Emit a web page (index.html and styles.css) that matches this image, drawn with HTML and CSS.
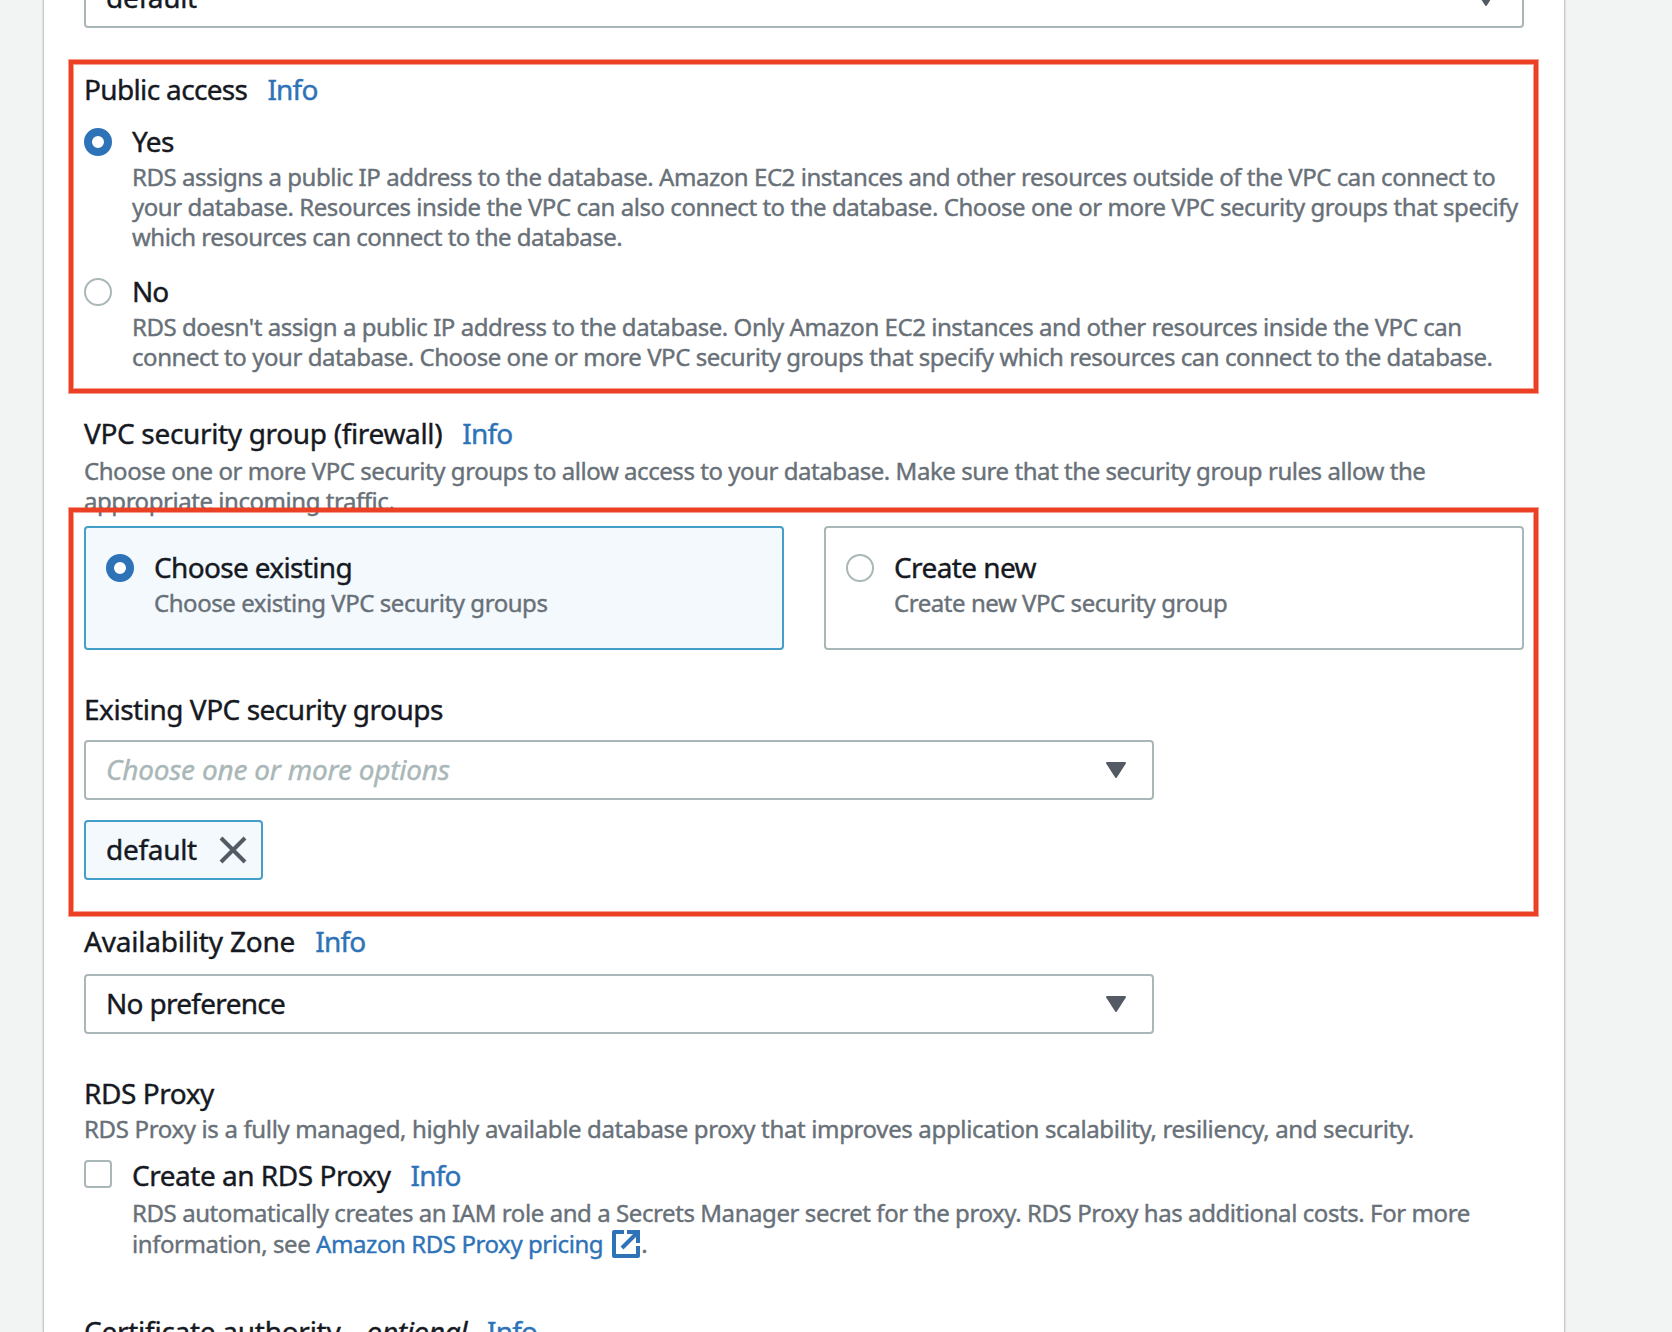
FILE: index.html
```html
<!DOCTYPE html>
<html lang="en">
<head>
<meta charset="utf-8">
<title>Create database - Connectivity</title>
<link rel="stylesheet" href="styles.css">
</head>
<body>
<main class="panel">
  <div class="select select-wide">
    <span class="value t-default">default</span>
    <svg class="caret" viewBox="0 0 20 16"><path d="M1 1H19L10 15Z"/></svg>
  </div>

  <section class="field access">
    <h3 class="label"><span class="t-access">Public access</span><a class="info">Info</a></h3>
    <div class="option">
      <span class="radio checked"></span>
      <div>
        <div class="label"><span class="t-yes">Yes</span></div>
        <p class="desc"><span>RDS assigns a public IP address to the database. Amazon EC2 instances and other resources outside of the VPC can connect to</span><br><span>your database. Resources inside the VPC can also connect to the database. Choose one or more VPC security groups that specify</span><br><span class="t-which">which resources can connect to the database.</span></p>
      </div>
    </div>
    <div class="option option-no">
      <span class="radio"></span>
      <div>
        <div class="label"><span class="t-no">No</span></div>
        <p class="desc"><span>RDS doesn't assign a public IP address to the database. Only Amazon EC2 instances and other resources inside the VPC can</span><br><span>connect to your database. Choose one or more VPC security groups that specify which resources can connect to the database.</span></p>
      </div>
    </div>
    <div class="highlight highlight-access"></div>
  </section>

  <section class="field firewall">
    <h3 class="label"><span class="t-firewall">VPC security group (firewall)</span><a class="info">Info</a></h3>
    <p class="desc desc-firewall"><span>Choose one or more VPC security groups to allow access to your database. Make sure that the security group rules allow the</span><br><span>appropriate incoming traffic.</span></p>
    <div class="tiles">
      <div class="tile selected">
        <span class="radio checked"></span>
        <div>
          <div class="label"><span class="t-choose">Choose existing</span></div>
          <p class="desc"><span>Choose existing VPC security groups</span></p>
        </div>
      </div>
      <div class="tile">
        <span class="radio"></span>
        <div>
          <div class="label"><span class="t-new">Create new</span></div>
          <p class="desc"><span>Create new VPC security group</span></p>
        </div>
      </div>
    </div>
    <div class="highlight highlight-groups"></div>
  </section>

  <section class="field groups">
    <h3 class="label"><span class="t-existing">Existing VPC security groups</span></h3>
    <div class="select">
      <span class="value placeholder">Choose one or more options</span>
      <svg class="caret" viewBox="0 0 20 16"><path d="M1 1H19L10 15Z"/></svg>
    </div>
    <div class="token">
      <span class="value t-default">default</span>
      <svg class="close" viewBox="0 0 28 28"><path d="M2 2L26 26M26 2L2 26"/></svg>
    </div>
  </section>

  <section class="field zone">
    <h3 class="label"><span class="t-zone">Availability Zone</span><a class="info">Info</a></h3>
    <div class="select">
      <span class="value t-pref">No preference</span>
      <svg class="caret" viewBox="0 0 20 16"><path d="M1 1H19L10 15Z"/></svg>
    </div>
  </section>

  <section class="field proxy">
    <h3 class="label"><span class="t-proxy">RDS Proxy</span></h3>
    <p class="desc"><span class="t-managed">RDS Proxy is a fully managed, highly available database proxy that improves application scalability, resiliency, and security.</span></p>
    <div class="option option-proxy">
      <span class="checkbox"></span>
      <div>
        <div class="label"><span class="t-create">Create an RDS Proxy</span><a class="info">Info</a></div>
        <p class="desc desc-proxy"><span class="t-auto">RDS automatically creates an IAM role and a Secrets Manager secret for the proxy. RDS Proxy has additional costs. For more</span><br><span class="t-auto">information, see <a class="link">Amazon RDS Proxy pricing</a></span><svg class="external" viewBox="0 0 28 28"><path class="frame" d="M12 2H2V26H26V16"/><path class="arrow" d="M10 18L25 3"/><path class="head" d="M15 0H28V13H24V4H15Z"/></svg>.</p>
      </div>
    </div>
  </section>

  <section class="field authority">
    <h3 class="label"><span class="t-cert">Certificate authority</span><em class="optional"> - optional</em><a class="info">Info</a></h3>
  </section>
</main>
</body>
</html>
```
FILE: styles.css
```css
* { box-sizing: border-box; }

html, body { height: 100%; }

body {
  margin: 0;
  overflow: hidden;
  background: #f2f3f3;
  color: #16191f;
  font-family: "Noto Sans", "Open Sans", sans-serif;
  font-size: 28px;
  letter-spacing: -0.6px;
  -webkit-text-stroke: 0.4px currentColor;
}

.panel {
  width: 1522px;
  height: 1332px;
  margin-left: 43px;
  padding: 0 40px;
  background: #fff;
  border: 1px solid #c3c9ca;
  border-width: 0 1px;
  box-shadow: 0 0 2px rgba(0, 28, 36, 0.2);
  overflow: hidden;
}

/* Text */
.label {
  display: flex;
  margin: 0;
  font-size: 28px;
  font-weight: 400;
  line-height: 36px;
  white-space: pre;
}

.desc {
  margin: 3px 0 0;
  color: #687078;
  font-size: 24px;
  line-height: 30px;
  letter-spacing: -0.45px;
  white-space: nowrap;
}

.info { margin-left: 20px; color: #2e73b8; letter-spacing: -0.8px; }
.link { color: #2e73b8; }
.optional { margin-left: 4px; letter-spacing: -0.4px; }

/* Select boxes */
.select {
  display: flex;
  align-items: center;
  justify-content: space-between;
  width: 1070px;
  height: 60px;
  padding: 0 26px 0 20px;
  border: 2px solid #aab7b8;
  border-radius: 4px;
  line-height: 36px;
}

.value { padding-bottom: 2px; }
.select-wide { width: 1440px; margin-top: -32px; }
.caret { width: 20px; height: 16px; }

.caret path {
  fill: #545b64;
  stroke: #545b64;
  stroke-width: 2;
  stroke-linejoin: round;
}

.placeholder { color: #aab7b8; font-style: italic; letter-spacing: -0.23px; }

/* Radios and checkboxes */
.radio, .checkbox {
  flex: none;
  width: 28px;
  height: 28px;
  border: 2px solid #aab7b8;
  background: #fff;
}

.radio { margin-top: 5px; border-radius: 50%; }
.radio.checked { border: 8px solid #2e73b8; }
.checkbox { margin-top: 3px; border-radius: 4px; }

.option { display: flex; gap: 20px; margin-top: 16px; }
.option-no { margin-top: 21px; }

/* Fields */
.field { position: relative; }
.access { margin-top: 43px; }
.firewall { margin-top: 43px; }
.desc-firewall { margin-top: 5px; }
.groups { margin-top: 41px; }
.groups .select { margin-top: 13px; }
.zone { margin-top: 43px; }
.zone .select { margin-top: 15px; }
.proxy { margin-top: 41px; }
.option-proxy { margin-top: 13px; }
.desc-proxy { margin-top: 4px; line-height: 31px; }
.authority { margin-top: 54px; }

/* Tiles */
.tiles { display: flex; gap: 40px; margin-top: 10px; }

.tile {
  display: flex;
  gap: 20px;
  width: 700px;
  height: 124px;
  padding: 21px 20px;
  border: 2px solid #aab7b8;
  border-radius: 4px;
}

.tile.selected { background: #f3f9fd; border-color: #449fc8; }

/* Selected group token */
.token {
  display: flex;
  align-items: center;
  justify-content: space-between;
  width: 179px;
  height: 60px;
  margin-top: 20px;
  padding: 0 14px 0 20px;
  border: 2px solid #449fc8;
  border-radius: 4px;
  background: #f3f9fd;
  line-height: 36px;
}

.close { width: 28px; height: 28px; }
.close path { fill: none; stroke: #545b64; stroke-width: 4; }

.external {
  width: 28px;
  height: 28px;
  margin: 0 1px 0 9px;
  vertical-align: -5px;
}

.external path { fill: none; stroke: #2e73b8; stroke-width: 4; stroke-linejoin: round; }
.external .head { fill: #2e73b8; stroke: none; }

/* Red callout frames drawn over the form */
.highlight {
  position: absolute;
  left: -15px;
  width: 1469px;
  border: 4px solid #ec4024;
  box-shadow: 0 0 0 1px rgba(236, 64, 36, 0.5), inset 0 0 0 1px rgba(236, 64, 36, 0.5);
}

.highlight-access { top: -11px; height: 333px; }
.highlight-groups { top: 93px; height: 408px; }

/* Per-string tracking */
.t-access { letter-spacing: -0.65px; }
.t-no { letter-spacing: -1.1px; }
.t-which { letter-spacing: -0.52px; }
.t-default { letter-spacing: -0.3px; }
.t-firewall { letter-spacing: -0.34px; }
.t-choose { letter-spacing: -0.66px; }
.t-existing { letter-spacing: -0.48px; }
.t-zone { letter-spacing: -0.2px; }
.t-pref { letter-spacing: -0.7px; }
.t-proxy { letter-spacing: -0.45px; }
.t-managed { letter-spacing: -0.35px; }
.t-create { letter-spacing: -0.48px; }
.t-auto { letter-spacing: -0.425px; }
.t-cert { letter-spacing: -0.27px; }
```
